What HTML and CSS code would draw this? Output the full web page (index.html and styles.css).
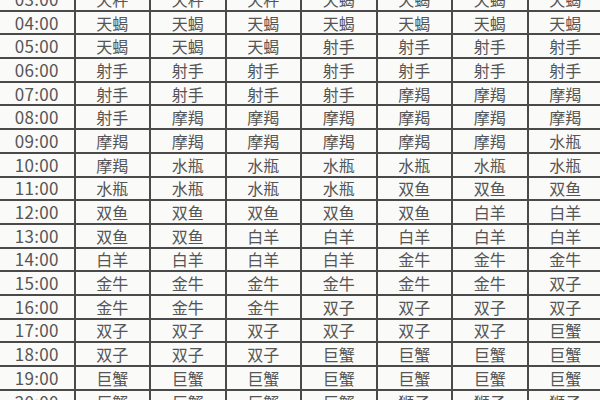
FILE: index.html
```html
<!DOCTYPE html>
<html lang="zh">
<head>
<meta charset="utf-8">
<title>上升星座对照表</title>
<link rel="stylesheet" href="styles.css">
</head>
<body>
<table class="chart">
<colgroup>
<col class="c"><col class="c"><col class="c"><col class="c"><col class="c"><col class="c"><col class="c"><col class="c">
</colgroup>
<tbody>
<tr><td class="t">03:00</td><td>天秤</td><td>天秤</td><td>天秤</td><td>天蝎</td><td>天蝎</td><td>天蝎</td><td>天蝎</td></tr>
<tr><td class="t">04:00</td><td>天蝎</td><td>天蝎</td><td>天蝎</td><td>天蝎</td><td>天蝎</td><td>天蝎</td><td>天蝎</td></tr>
<tr><td class="t">05:00</td><td>天蝎</td><td>天蝎</td><td>天蝎</td><td>射手</td><td>射手</td><td>射手</td><td>射手</td></tr>
<tr><td class="t">06:00</td><td>射手</td><td>射手</td><td>射手</td><td>射手</td><td>射手</td><td>射手</td><td>射手</td></tr>
<tr><td class="t">07:00</td><td>射手</td><td>射手</td><td>射手</td><td>射手</td><td>摩羯</td><td>摩羯</td><td>摩羯</td></tr>
<tr><td class="t">08:00</td><td>射手</td><td>摩羯</td><td>摩羯</td><td>摩羯</td><td>摩羯</td><td>摩羯</td><td>摩羯</td></tr>
<tr><td class="t">09:00</td><td>摩羯</td><td>摩羯</td><td>摩羯</td><td>摩羯</td><td>摩羯</td><td>摩羯</td><td>水瓶</td></tr>
<tr><td class="t">10:00</td><td>摩羯</td><td>水瓶</td><td>水瓶</td><td>水瓶</td><td>水瓶</td><td>水瓶</td><td>水瓶</td></tr>
<tr><td class="t">11:00</td><td>水瓶</td><td>水瓶</td><td>水瓶</td><td>水瓶</td><td>双鱼</td><td>双鱼</td><td>双鱼</td></tr>
<tr><td class="t">12:00</td><td>双鱼</td><td>双鱼</td><td>双鱼</td><td>双鱼</td><td>双鱼</td><td>白羊</td><td>白羊</td></tr>
<tr><td class="t">13:00</td><td>双鱼</td><td>双鱼</td><td>白羊</td><td>白羊</td><td>白羊</td><td>白羊</td><td>白羊</td></tr>
<tr><td class="t">14:00</td><td>白羊</td><td>白羊</td><td>白羊</td><td>白羊</td><td>金牛</td><td>金牛</td><td>金牛</td></tr>
<tr><td class="t">15:00</td><td>金牛</td><td>金牛</td><td>金牛</td><td>金牛</td><td>金牛</td><td>金牛</td><td>双子</td></tr>
<tr><td class="t">16:00</td><td>金牛</td><td>金牛</td><td>金牛</td><td>双子</td><td>双子</td><td>双子</td><td>双子</td></tr>
<tr><td class="t">17:00</td><td>双子</td><td>双子</td><td>双子</td><td>双子</td><td>双子</td><td>双子</td><td>巨蟹</td></tr>
<tr><td class="t">18:00</td><td>双子</td><td>双子</td><td>双子</td><td>巨蟹</td><td>巨蟹</td><td>巨蟹</td><td>巨蟹</td></tr>
<tr><td class="t">19:00</td><td>巨蟹</td><td>巨蟹</td><td>巨蟹</td><td>巨蟹</td><td>巨蟹</td><td>巨蟹</td><td>巨蟹</td></tr>
<tr><td class="t">20:00</td><td>巨蟹</td><td>巨蟹</td><td>巨蟹</td><td>巨蟹</td><td>狮子</td><td>狮子</td><td>狮子</td></tr>
</tbody>
</table>
</body>
</html>
```
FILE: styles.css
```css
html, body {
  margin: 0;
  padding: 0;
  background: #fafaf8;
  overflow: hidden;
  width: 600px;
  height: 400px;
}
.chart {
  border-collapse: collapse;
  table-layout: fixed;
  width: 604px;
  margin-left: -2px;
  margin-top: -14px;
  font-family: "Noto Sans CJK SC", "Noto Sans", sans-serif;
  color: #555;
}
.chart .c {
  width: 75.5px;
}
.chart td {
  border: 2px solid #4a4a4a;
  height: 23.7px;
  padding: 0;
  text-align: center;
  font-size: 16px;
  line-height: 20px;
  box-sizing: border-box;
}
.chart td.t {
  font-size: 17px;
  letter-spacing: 0.3px;
}
```
